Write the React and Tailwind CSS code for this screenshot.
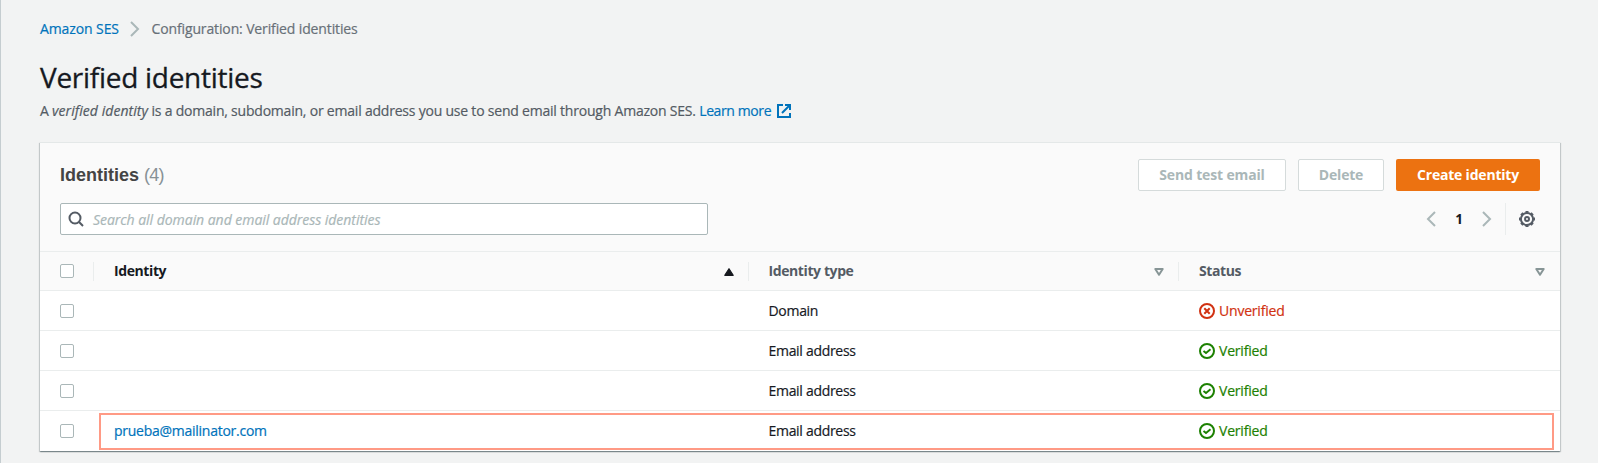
const rows = [
  { identity: "", type: "Domain", verified: false },
  { identity: "", type: "Email address", verified: true },
  { identity: "", type: "Email address", verified: true },
  { identity: "prueba@mailinator.com", type: "Email address", verified: true, highlighted: true },
];

const grid = "grid grid-cols-[54px_654px_431px_381px]";

function Chevron({ className, flip }) {
  return (
    <svg className={className} viewBox="0 0 16 16" fill="none" stroke="currentColor" strokeWidth="2">
      <path d={flip ? "M12 1 5 8l7 7" : "M4 1l7 7-7 7"} />
    </svg>
  );
}

function SearchIcon() {
  return (
    <svg className="size-4 text-[#545b64]" viewBox="0 0 16 16" fill="none" stroke="currentColor" strokeWidth="2">
      <circle cx="7" cy="7" r="5.5" />
      <path d="m15 15-4.2-4.2" />
    </svg>
  );
}

function ExternalIcon() {
  return (
    <svg className="size-4" viewBox="0 0 16 16" fill="none" stroke="currentColor" strokeWidth="2">
      <path d="M14 10v4H2V2h5" />
      <path d="M9 2h5v5M6 10l8-8" />
    </svg>
  );
}

function GearIcon() {
  const teeth = [0, 45, 90, 135, 180, 225, 270, 315];
  return (
    <svg className="size-4 text-[#545b64]" viewBox="0 0 16 16" fill="none" stroke="currentColor">
      <circle cx="8" cy="8" r="6.1" strokeWidth="2" />
      <circle cx="8" cy="8" r="2" strokeWidth="2" />
      {teeth.map((a) => (
        <path key={a} d="M6.5 .9h3" strokeWidth="1.8" transform={`rotate(${a} 8 8)`} />
      ))}
    </svg>
  );
}

function StatusIcon({ ok }) {
  return (
    <svg className="size-4" viewBox="0 0 16 16" fill="none" stroke="currentColor" strokeWidth="2">
      <circle cx="8" cy="8" r="7" />
      {ok ? <path d="m4.5 8 2.5 2.1 4.5-3.8" strokeWidth="1.9" /> : <path d="m5.3 5.3 5.4 5.4m0-5.4-5.4 5.4" />}
    </svg>
  );
}

function SortIcon({ active }) {
  return active ? (
    <svg className="h-2 w-[10px] text-[#16191f]" viewBox="0 0 10 8">
      <path d="M5 .7 9.2 7.3H.8z" fill="currentColor" stroke="currentColor" strokeWidth="1.2" strokeLinejoin="round" />
    </svg>
  ) : (
    <svg className="h-2 w-[10px] text-[#879596]" viewBox="0 0 10 8">
      <path d="M1.3 1h7.4L5 6.8z" fill="none" stroke="currentColor" strokeWidth="2" strokeLinejoin="round" />
    </svg>
  );
}

function Checkbox() {
  return <span className="block size-[14px] rounded-[2px] border border-[#aab7b8] bg-white" />;
}

function HeaderCell({ label, className, active }) {
  return (
    <div
      className={`mt-[10px] flex h-[19px] items-center justify-between border-l border-[#eaeded] leading-[19px] font-bold tracking-[-0.4px] ${active ? "text-[#16191f]" : "text-[#545b64]"} ${className}`}
    >
      <span className="pb-[3px]">{label}</span>
      <SortIcon active={active} />
    </div>
  );
}

export default function App() {
  return (
    <div className="h-[463px] w-[1598px] overflow-hidden border-l border-[#c5cdd0] bg-[#f2f3f3] pr-[38px] pl-[39px] font-['Open_Sans','Noto_Sans',sans-serif] text-[14px] text-[#16191f]">
      <nav className="flex h-[56px] items-center [-webkit-text-stroke:0.2px]">
        <a className="w-[80px] tracking-[-0.1px] whitespace-nowrap text-[#0073bb]">Amazon SES</a>
        <Chevron className="mt-0.5 mr-[8.5px] ml-[7px] size-4 text-[#aab7b8]" />
        <span className="tracking-[-0.13px] text-[#687078]">Configuration: Verified identities</span>
      </nav>
      <h1 className="h-[42px] text-[28px] leading-[42px] tracking-[-0.28px] [-webkit-text-stroke:0.3px]">Verified identities</h1>
      <p className="flex h-[44px] items-start pt-[2px] leading-[22px] tracking-[-0.212px] text-[#545b64] [-webkit-text-stroke:0.2px]">
        <span className="whitespace-pre">
          A <em className="tracking-[0.06px]">verified identity</em> is a domain, subdomain, or email address you use to send email through Amazon SES.{" "}
        </span>
        <a className="flex items-center gap-[5px] tracking-[-0.4px] text-[#0073bb]">
          Learn more <ExternalIcon />
        </a>
      </p>

      <section className="flex h-[309px] w-[1520px] flex-col border-t border-[#e4e8e8] bg-white shadow-[0_1px_1px_0_rgba(0,28,36,.3),1px_1px_1px_0_rgba(0,28,36,.15),-1px_1px_1px_0_rgba(0,28,36,.15)]">
        <header className="h-[109px] border-b border-[#eaeded] bg-[#fafafa] px-5 pt-4">
          <div className="flex h-8 items-center gap-3">
            <h2 className="mr-auto font-['Liberation_Sans',sans-serif] text-[18px] font-bold text-[#444]">
              Identities <span className="font-normal tracking-[-0.8px] text-[#879196]">(4)</span>
            </h2>
            <button className="h-8 w-[148px] rounded-[2px] border border-[#d5dbdb] bg-white pb-0.5 font-bold tracking-[-0.15px] text-[#aab7b8]">
              Send test email
            </button>
            <button className="h-8 w-[86px] rounded-[2px] border border-[#d5dbdb] bg-white pb-0.5 font-bold tracking-[-0.2px] text-[#aab7b8]">
              Delete
            </button>
            <button className="h-8 w-[144px] rounded-[2px] bg-[#ec7211] pb-0.5 font-bold tracking-[-0.2px] text-white">
              Create identity
            </button>
          </div>
          <div className="mt-3 flex h-8 items-center">
            <div className="mr-auto flex h-8 w-[648px] items-center gap-[9px] rounded-[2px] border border-[#aab7b8] bg-white pl-[7px] tracking-[-0.04px] text-[#aab7b8] italic">
              <SearchIcon />
              <span className="[-webkit-text-stroke:0.2px]">Search all domain and email address identities</span>
            </div>
            <Chevron flip className="size-4 text-[#aab7b8]" />
            <span className="w-[40px] text-center text-[13.5px] font-bold">1</span>
            <Chevron className="size-4 text-[#aab7b8]" />
            <div className="ml-[10px] flex h-8 w-[35px] items-center border-l border-[#eaeded] pl-[13px]">
              <GearIcon />
            </div>
          </div>
        </header>

        <div className={`${grid} h-[39px] border-b border-[#eaeded] bg-[#fafafa]`}>
          <div className="pt-3 pl-5"><Checkbox /></div>
          <HeaderCell label="Identity" active className="-ml-px pr-[14px] pl-5" />
          <HeaderCell label="Identity type" className="pr-[15px] pl-[19.5px]" />
          <HeaderCell label="Status" className="-ml-px pr-[15px] pl-5" />
        </div>

        {rows.map((r, i) => (
          <div
            key={i}
            className={`${grid} relative h-10 items-center border-b [-webkit-text-stroke:0.2px] ${i < 3 ? "border-[#eaeded]" : "border-transparent"}`}
          >
            <div className="pl-5"><Checkbox /></div>
            <div className="pl-5 tracking-[-0.26px] text-[#0073bb]">{r.identity}</div>
            <div className="pl-[20.5px] tracking-[-0.3px]">{r.type}</div>
            <div className={`flex items-center gap-1 pl-5 tracking-[-0.2px] ${r.verified ? "text-[#1d8102]" : "text-[#d13212]"}`}>
              <StatusIcon ok={r.verified} />
              {r.verified ? "Verified" : "Unverified"}
            </div>
            {r.highlighted && (
              <div className="absolute top-[2px] left-[59px] h-[37px] w-[1455px] border-2 border-[#ff9a85]" />
            )}
          </div>
        ))}
      </section>
    </div>
  );
}
